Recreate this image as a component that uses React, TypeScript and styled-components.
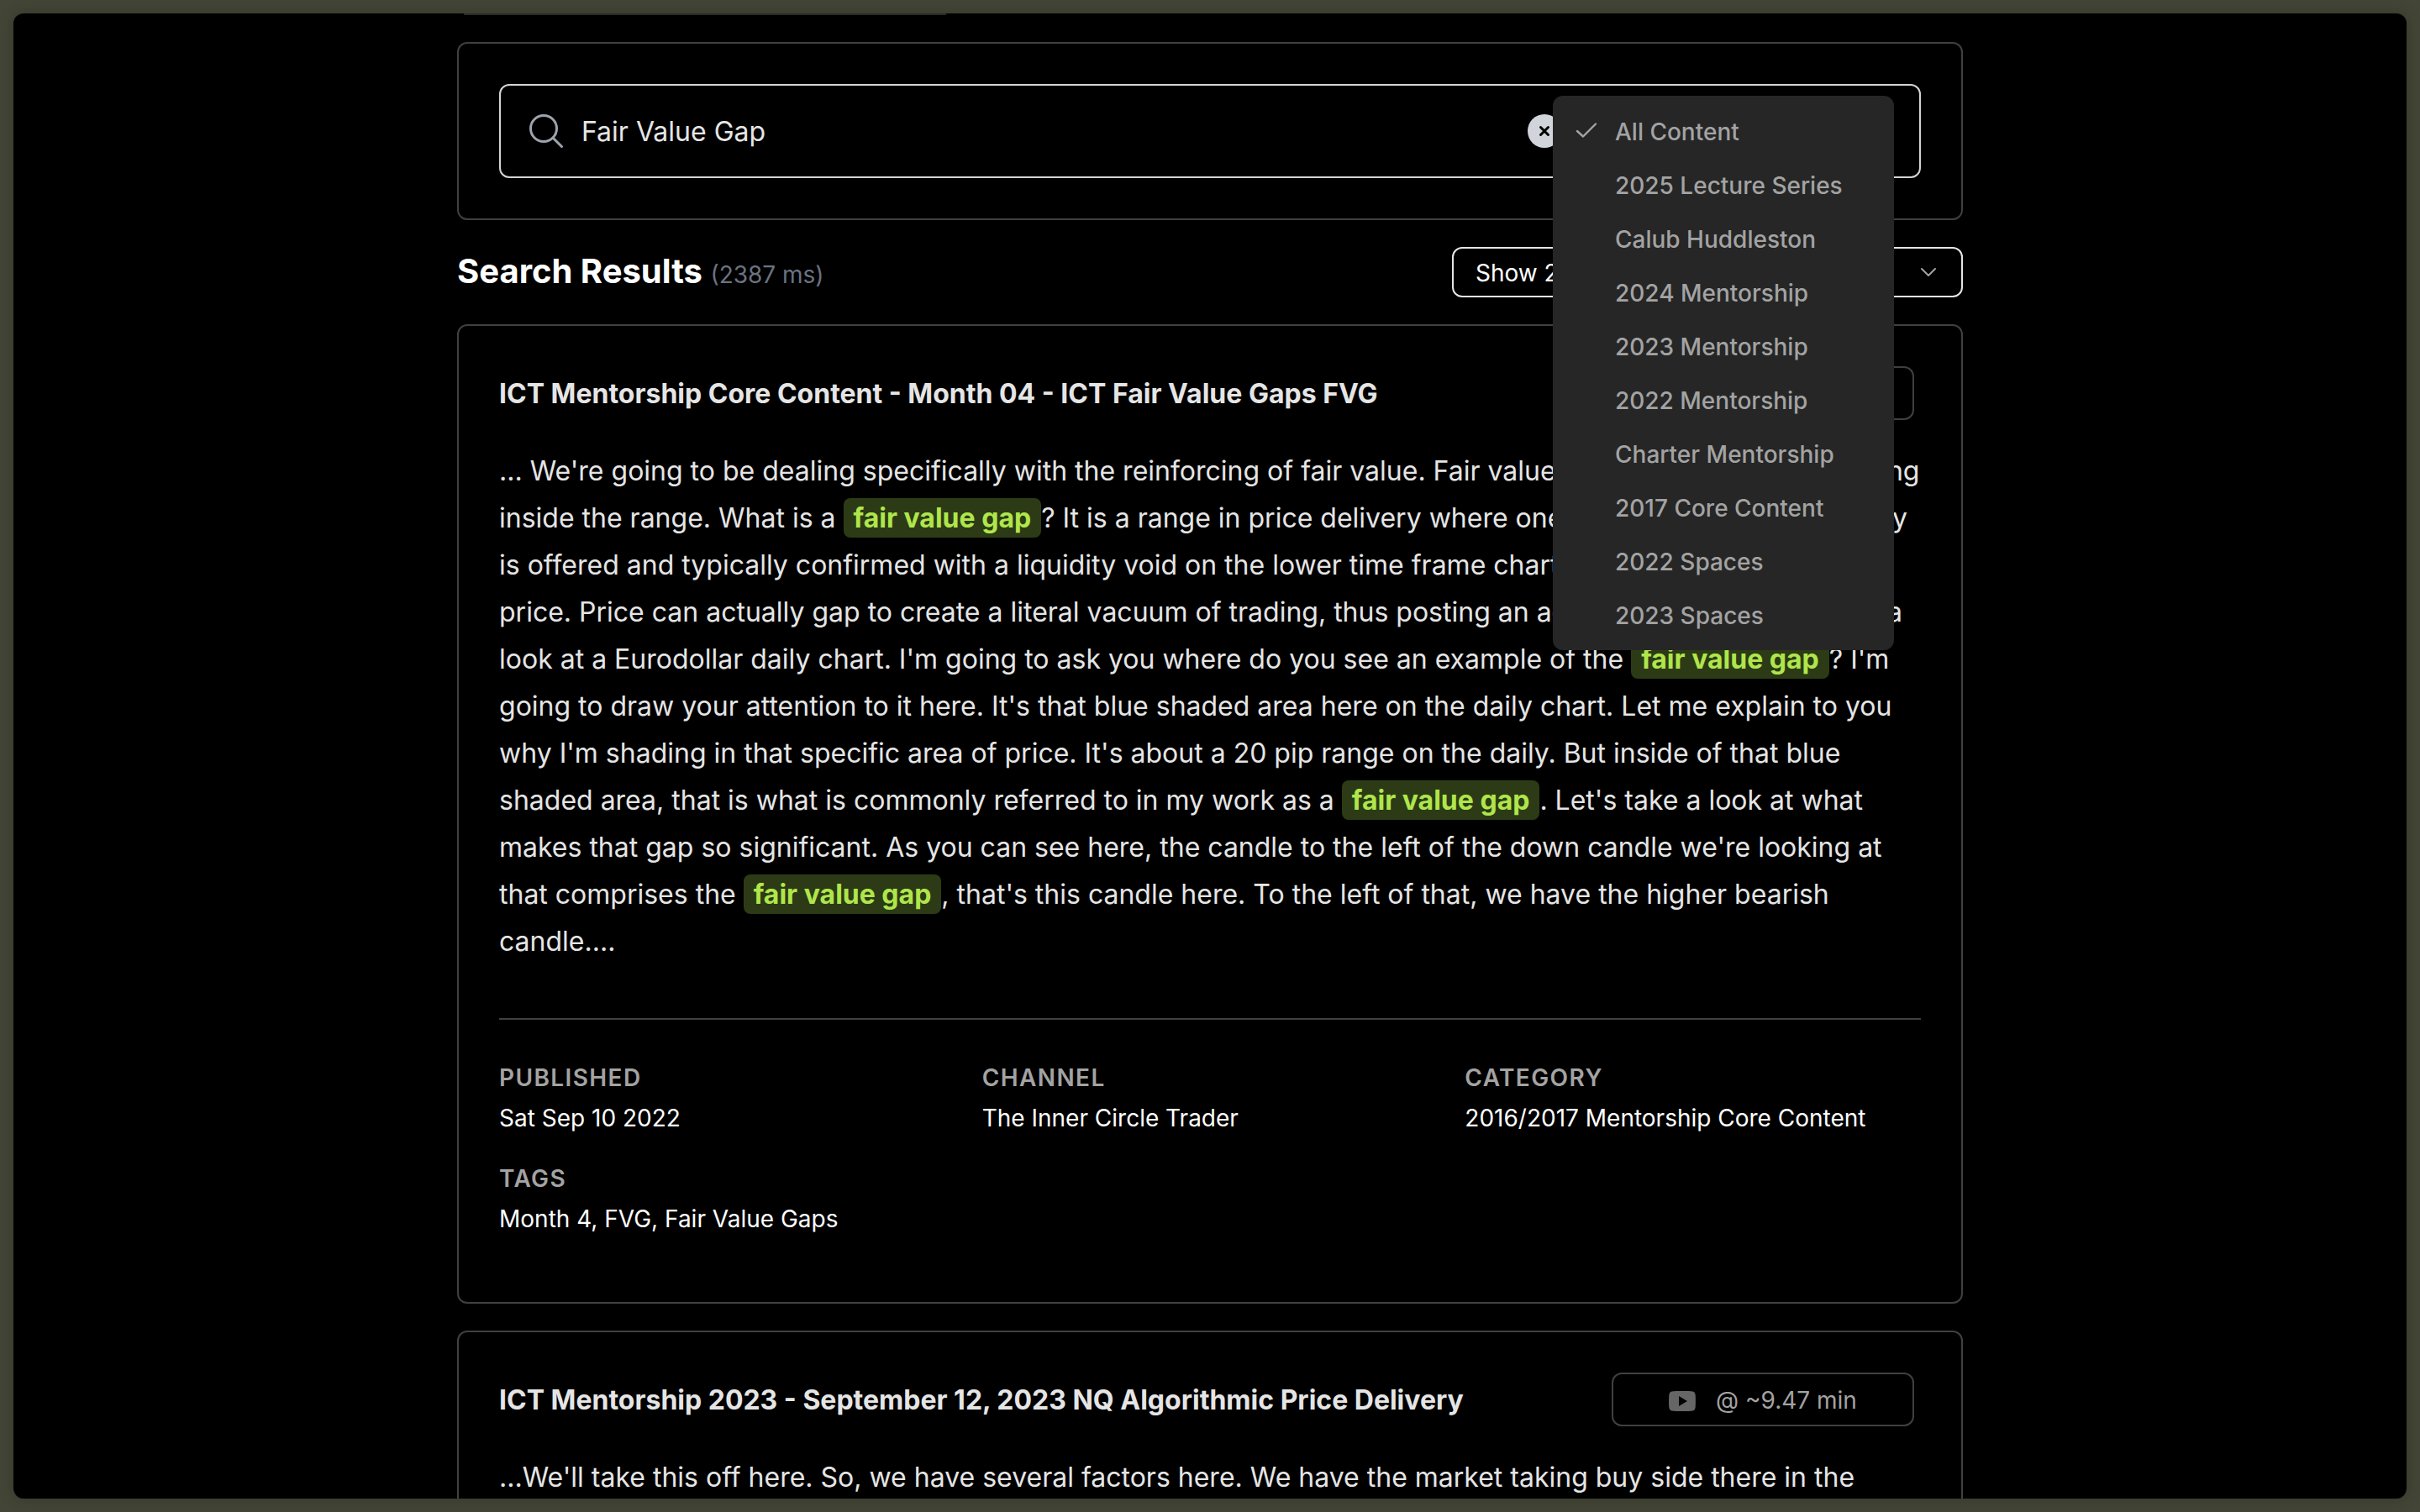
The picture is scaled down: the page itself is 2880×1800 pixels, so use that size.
import React from "react";
import styled, { createGlobalStyle } from "styled-components";

const line = "#404040";

const Global = createGlobalStyle`
  *, *::before, *::after { box-sizing: border-box; }
  body {
    margin: 0;
    background: #434537;
    color: #e5e5e5;
    font-family: Inter, "Liberation Sans", sans-serif;
    font-size: 28px;
    line-height: 40px;
  }
  input, button, select { font: inherit; color: inherit; }
`;

const Desktop = styled.div`
  height: 100vh;
  padding: 16px;
  display: flex;
`;

const Window = styled.div`
  flex: 1;
  overflow: hidden;
  background: #000;
  border-radius: 12px;
  box-shadow: 0 0 16px rgba(28, 32, 14, 0.35);
`;

const Column = styled.main`
  max-width: 1792px;
  margin: 0 auto;
  display: flex;
  flex-direction: column;
  gap: 32px;
`;

const TabStrip = styled.div`
  width: 590px;
  height: 2px;
  padding: 0 8px;
  background: #2a2a2a;
  background-clip: content-box;
`;

const Card = styled.section`
  padding: 48px;
  border: 2px solid ${line};
  border-radius: 12px;
`;

const SearchBox = styled.form`
  position: relative;
  display: flex;
  align-items: center;
  gap: 20px;
  height: 112px;
  padding: 0 34px;
  border: 2px solid #d4d4d4;
  border-radius: 12px;
`;

const SearchInput = styled.input`
  flex: 1;
  padding: 2px 0 0;
  border: 0;
  outline: 0;
  background: none;
  font-size: 32px;
  line-height: 48px;
`;

const Clear = styled.button`
  display: flex;
  margin-right: 392px;
  padding: 0;
  border: 0;
  background: none;
`;

const Menu = styled.ul`
  position: absolute;
  z-index: 2;
  top: 12px;
  right: 30px;
  width: 406px;
  margin: 0;
  padding: 11px 10px 9px;
  list-style: none;
  background: #262626;
  border-radius: 12px;
`;

const Option = styled.button`
  display: grid;
  grid-template-columns: 32px 1fr;
  align-items: center;
  gap: 16px;
  width: 100%;
  height: 64px;
  padding: 0 16px;
  border: 0;
  background: none;
  color: #a3a3a3;
  font-weight: 500;
  text-align: left;
  white-space: nowrap;
`;

const ResultsBar = styled.div`
  display: flex;
  justify-content: space-between;
  height: 60px;
`;

const Heading = styled.h1`
  margin: 0;
  color: #fff;
  font-size: 40px;
  line-height: 58px;
  font-weight: 700;
`;

const Timing = styled.span`
  color: #6b7280;
  font-size: 28px;
  font-weight: 400;
`;

const SelectWrap = styled.label`
  display: grid;
  align-items: center;
  width: 608px;
  & > * { grid-area: 1 / 1; }
  & > svg { justify-self: end; margin-right: 32px; pointer-events: none; }
`;

const Select = styled.select`
  appearance: none;
  width: 100%;
  height: 60px;
  padding: 1px 26px 0;
  border: 2px solid #e5e5e5;
  border-radius: 12px;
  background: #000;
  color: #fff;
`;

const CardHead = styled.header`
  display: flex;
  justify-content: space-between;
  align-items: center;
  padding-right: 8px;
`;

const Title = styled.h2`
  margin: 0;
  padding-top: 2px;
  font-size: 32px;
  line-height: 56px;
  font-weight: 700;
`;

const WatchLink = styled.a`
  display: flex;
  align-items: center;
  justify-content: center;
  gap: 24px;
  width: 360px;
  height: 64px;
  padding-top: 2px;
  border: 2px solid ${line};
  border-radius: 12px;
  color: #a3a3a3;
  text-decoration: none;
`;

const Excerpt = styled.p`
  margin: 33px 0 63px;
  font-size: 32px;
  line-height: 56px;
`;

const Mark = styled.mark`
  padding: 4px 12px;
  border-radius: 8px;
  background: #2c3b15;
  color: #b0e64c;
  font-weight: 700;
`;

const Meta = styled.dl`
  display: grid;
  grid-template-columns: repeat(3, 1fr);
  gap: 32px;
  margin: 0;
  padding: 49px 0 31px;
  border-top: 2px solid ${line};
`;

const Term = styled.dt`
  color: #a3a3a3;
  font-weight: 600;
  letter-spacing: 0.05em;
  text-transform: uppercase;
`;

const Detail = styled.dd`
  margin: 8px 0 0;
  color: #fff;
`;

const options = [
  "All Content",
  "2025 Lecture Series",
  "Calub Huddleston",
  "2024 Mentorship",
  "2023 Mentorship",
  "2022 Mentorship",
  "Charter Mentorship",
  "2017 Core Content",
  "2022 Spaces",
  "2023 Spaces",
];

type Result = {
  title: string;
  at: string;
  excerpt: string;
  meta?: [string, string][];
};

const results: Result[] = [
  {
    title: "ICT Mentorship Core Content - Month 04 - ICT Fair Value Gaps FVG",
    at: "@ ~0.15 min",
    excerpt:
      "... We're going to be dealing specifically with the reinforcing of fair value. Fair value is a condition as price being inside the range. What is a [fair value gap]? It is a range in price delivery where one side of the market liquidity is offered and typically confirmed with a liquidity void on the lower time frame charts in the same range of the price. Price can actually gap to create a literal vacuum of trading, thus posting an actual price gap. Let's take a look at a Eurodollar daily chart. I'm going to ask you where do you see an example of the [fair value gap]? I'm going to draw your attention to it here. It's that blue shaded area here on the daily chart. Let me explain to you why I'm shading in that specific area of price. It's about a 20 pip range on the daily. But inside of that blue shaded area, that is what is commonly referred to in my work as a [fair value gap]. Let's take a look at what makes that gap so significant. As you can see here, the candle to the left of the down candle we're looking at that comprises the [fair value gap], that's this candle here. To the left of that, we have the higher bearish candle....",
    meta: [
      ["Published", "Sat Sep 10 2022"],
      ["Channel", "The Inner Circle Trader"],
      ["Category", "2016/2017 Mentorship Core Content"],
      ["Tags", "Month 4, FVG, Fair Value Gaps"],
    ],
  },
  {
    title: "ICT Mentorship 2023 - September 12, 2023 NQ Algorithmic Price Delivery",
    at: "@ ~9.47 min",
    excerpt:
      "...We'll take this off here. So, we have several factors here. We have the market taking buy side there in the",
  },
];

const SearchIcon = () => (
  <svg width="42" height="42" viewBox="0 0 42 42" fill="none" stroke="#9ca3af" strokeWidth="3" strokeLinecap="round" aria-hidden="true">
    <circle cx="17" cy="18" r="15.5" />
    <path d="M28 29 38.500 39.500" />
  </svg>
);

const ClearIcon = () => (
  <svg width="40" height="40" viewBox="0 0 40 40" aria-hidden="true">
    <circle cx="20" cy="20" r="20" fill="#d1d5db" />
    <path d="m15.500 15.500 9 9M24.500 15.500l-9 9" stroke="#000" strokeWidth="3" strokeLinecap="round" />
  </svg>
);

const CheckIcon = () => (
  <svg width="32" height="32" viewBox="0 0 32 32" fill="none" stroke="#a3a3a3" strokeWidth="2.400" strokeLinecap="round" strokeLinejoin="round" aria-hidden="true">
    <path d="m3 15 7 6.500L25 6.500" />
  </svg>
);

const ChevronIcon = () => (
  <svg width="18" height="12" viewBox="0 0 18 12" fill="none" stroke="#a3a3a3" strokeWidth="2" strokeLinecap="round" strokeLinejoin="round" aria-hidden="true">
    <path d="m1 2 8 8 8-8" />
  </svg>
);

const PlayIcon = () => (
  <svg width="32" height="28" viewBox="0 -3 32 28" aria-hidden="true">
    <path fill="#666" d="M16 0C10 0 6 .1 3.500.6 1.500 1 .5 2.500.3 5 0 8 0 16 .3 19c.2 2.500 1.200 4 3.200 4.400 2.500.5 6.500.6 12.500.6s10-.1 12.500-.6c2-.4 3-1.900 3.200-4.400.3-3 .3-11 0-14-.2-2.500-1.200-4-3.200-4.400C26 .1 22 0 16 0Z" />
    <path fill="#000" d="m12 6 10 6-10 6Z" />
  </svg>
);

const Highlighted = ({ text }: { text: string }) => (
  <>
    {text.split(/[[\]]/).map((part, i) =>
      i % 2 ? <Mark key={i}>{part}</Mark> : <React.Fragment key={i}>{part}</React.Fragment>
    )}
  </>
);

export default function App() {
  return (
    <Desktop>
      <Global />
      <Window>
        <Column>
          <TabStrip />
          <Card>
            <SearchBox>
              <SearchIcon />
              <SearchInput aria-label="Search" defaultValue="Fair Value Gap" />
              <Clear type="button" aria-label="Clear search">
                <ClearIcon />
              </Clear>
              <Menu>
                {options.map((name, i) => (
                  <li key={name}>
                    <Option type="button">
                      {i === 0 ? <CheckIcon /> : <span />}
                      {name}
                    </Option>
                  </li>
                ))}
              </Menu>
            </SearchBox>
          </Card>
          <ResultsBar>
            <Heading>
              Search Results <Timing>(2387 ms)</Timing>
            </Heading>
            <SelectWrap>
              <Select aria-label="Results shown">
                <option>Show 20 results</option>
              </Select>
              <ChevronIcon />
            </SelectWrap>
          </ResultsBar>
          {results.map((r) => (
            <Card as="article" key={r.title}>
              <CardHead>
                <Title>{r.title}</Title>
                <WatchLink href="#watch">
                  <PlayIcon />
                  {r.at}
                </WatchLink>
              </CardHead>
              <Excerpt>
                <Highlighted text={r.excerpt} />
              </Excerpt>
              {r.meta && (
                <Meta>
                  {r.meta.map(([term, detail]) => (
                    <div key={term}>
                      <Term>{term}</Term>
                      <Detail>{detail}</Detail>
                    </div>
                  ))}
                </Meta>
              )}
            </Card>
          ))}
        </Column>
      </Window>
    </Desktop>
  );
}
